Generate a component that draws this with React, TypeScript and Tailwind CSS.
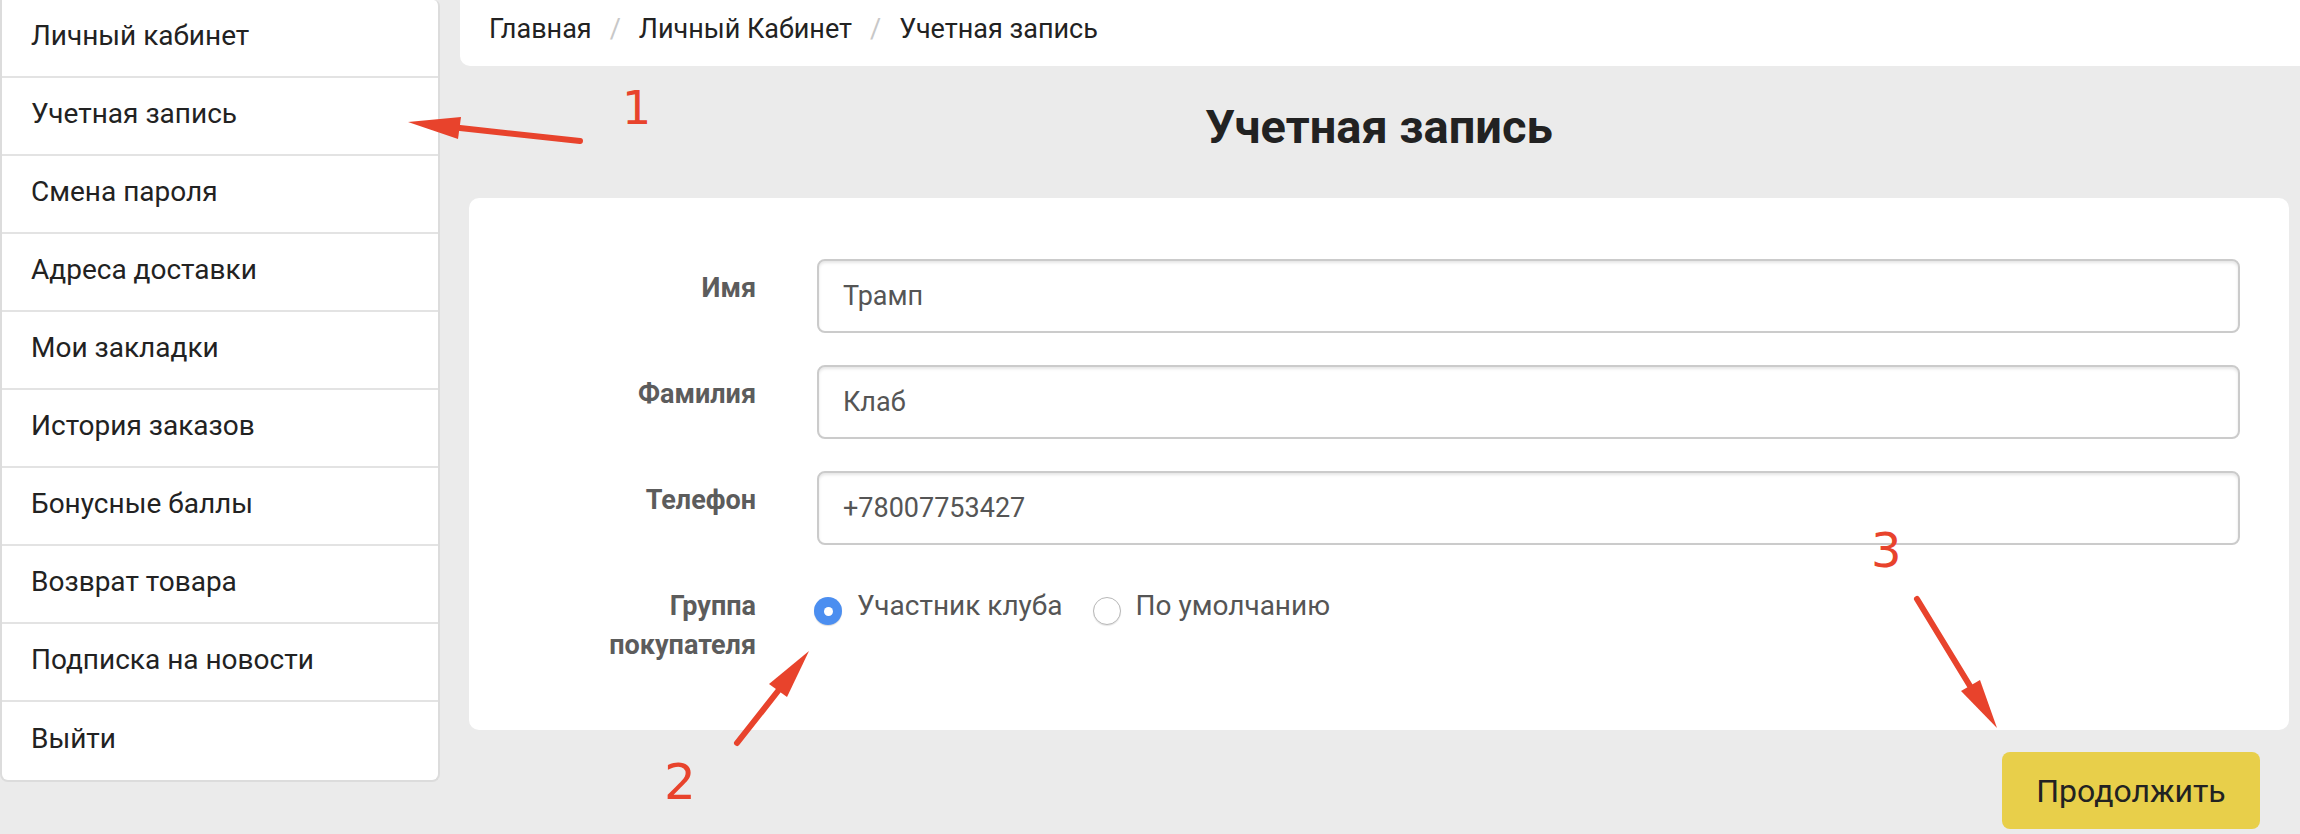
import React from "react";

const menu = [
  "Личный кабинет",
  "Учетная запись",
  "Смена пароля",
  "Адреса доставки",
  "Мои закладки",
  "История заказов",
  "Бонусные баллы",
  "Возврат товара",
  "Подписка на новости",
  "Выйти",
];

function Field({ label, value }: { label: string; value: string }) {
  return (
    <div className="flex items-start">
      <div className="w-[287px] shrink-0 pt-[10px] text-right text-[27px] font-bold leading-[39px] text-[#5c5c5c]">
        {label}
      </div>
      <div className="ml-[61px] flex h-[74px] flex-1 items-center rounded-[8px] border-2 border-[#cbcbcb] bg-white pl-[24px] text-[27px] text-[#555] shadow-[inset_0_2px_3px_rgba(0,0,0,0.10)]">
        {value}
      </div>
    </div>
  );
}

function Radio({ checked, label }: { checked: boolean; label: string }) {
  return (
    <div className="flex items-start gap-[15px]">
      {checked ? (
        <div className="mt-[11px] flex h-[28px] w-[28px] items-center justify-center rounded-full bg-[#4b8ef0] shadow-[0_1px_1px_rgba(0,0,0,0.15)]">
          <div className="h-[9px] w-[9px] rounded-full bg-white" />
        </div>
      ) : (
        <div className="mt-[11px] h-[28px] w-[28px] rounded-full border-[1.5px] border-[#b8b8b8] bg-white shadow-[0_1px_1px_rgba(0,0,0,0.1)]" />
      )}
      <span className="text-[28px] leading-[39px] text-[#555]">{label}</span>
    </div>
  );
}

export default function App() {
  return (
    <div className="relative flex h-[834px] w-[2300px] overflow-hidden bg-[#ebebeb] font-[Roboto,sans-serif]">
      {/* Sidebar */}
      <div className="w-[440px] shrink-0 self-start overflow-hidden rounded-b-[8px] rounded-tr-[6px] border-x-2 border-b-2 border-[#dcdcdc] bg-white">
        {menu.map((m, i) => (
          <div
            key={m}
            className={
              "flex h-[78px] items-center pb-[5px] pl-[29px] text-[28px] text-[#222] " +
              (i < menu.length - 1 ? "border-b-2 border-[#e3e3e3]" : "")
            }
          >
            {m}
          </div>
        ))}
      </div>

      {/* Main */}
      <div className="ml-[20px] flex flex-1 flex-col">
        <div className="flex h-[66px] items-center rounded-bl-[10px] bg-white pb-[7px] pl-[29px] text-[27px] text-[#222]">
          <span>Главная</span>
          <span className="mx-[18px] text-[#c8c8c8]">/</span>
          <span>Личный Кабинет</span>
          <span className="mx-[18px] text-[#c8c8c8]">/</span>
          <span>Учетная запись</span>
        </div>

        <div className="ml-[9px] mr-[11px] flex flex-col">
          <div className="mt-[30px] flex h-[60px] items-center justify-center text-[47px] font-bold leading-none text-[#222]">
            Учетная запись
          </div>

          <div className="mt-[42px] flex h-[532px] flex-col gap-[32px] rounded-[10px] bg-white pr-[49px] pt-[61px]">
            <Field label="Имя" value="Трамп" />
            <Field label="Фамилия" value="Клаб" />
            <Field label="Телефон" value="+78007753427" />
            <div className="flex items-start">
              <div className="w-[287px] shrink-0 pt-[10px] text-right text-[27px] font-bold leading-[39px] text-[#5c5c5c]">
                Группа
                <br />
                покупателя
              </div>
              <div className="ml-[58px] flex items-start gap-[30px] pt-[9px]">
                <Radio checked label="Участник клуба" />
                <Radio checked={false} label="По умолчанию" />
              </div>
            </div>
          </div>

          <div className="mr-[29px] mt-[22px] flex justify-end">
            <button className="flex h-[77px] w-[258px] items-center justify-center rounded-[8px] bg-[#e8cf4a] text-[32px] text-[#222]">
              Продолжить
            </button>
          </div>
        </div>
      </div>

      {/* Annotations */}
      <svg
        className="pointer-events-none absolute left-0 top-0"
        width="2300"
        height="834"
        viewBox="0 0 2300 834"
      >
        <g stroke="#e8432c" strokeWidth="6" strokeLinecap="round" fill="none">
          <line x1="580" y1="141" x2="460" y2="128" />
          <line x1="737" y1="743" x2="778" y2="691" />
          <line x1="1917" y1="599" x2="1970" y2="686" />
        </g>
        <g fill="#e8432c">
          <polygon points="408,122 461,117 458,139" />
          <polygon points="809,651 787,697 769,684" />
          <polygon points="1997,728 1961,691 1980,680" />
        </g>
      </svg>
      <div className="pointer-events-none absolute left-[622px] top-[85px] font-['DejaVu_Sans',sans-serif] text-[46px] leading-[46px] text-[#e8432c]">
        1
      </div>
      <div className="pointer-events-none absolute left-[664px] top-[757px] font-['DejaVu_Sans',sans-serif] text-[50px] leading-[50px] text-[#e8432c]">
        2
      </div>
      <div className="pointer-events-none absolute left-[1871px] top-[526px] font-['DejaVu_Sans',sans-serif] text-[48px] leading-[48px] text-[#e8432c]">
        3
      </div>
    </div>
  );
}
